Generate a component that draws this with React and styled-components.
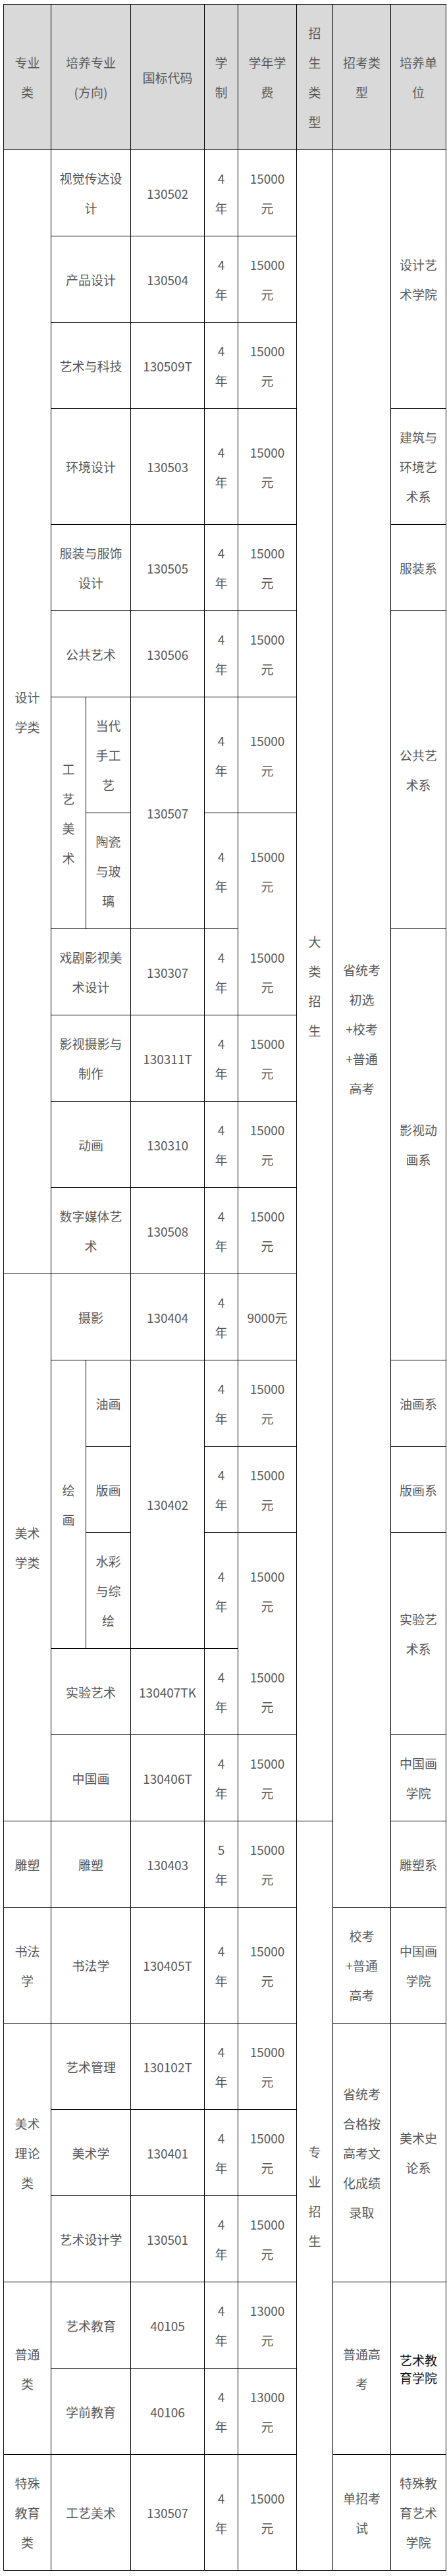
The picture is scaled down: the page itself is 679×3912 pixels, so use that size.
import React from 'react';
import styled, { createGlobalStyle, css } from 'styled-components';

const GlobalStyle = createGlobalStyle`
  body {
    margin: 0;
    background: #fff;
    font-family: "Noto Sans CJK SC", "Noto Sans", sans-serif;
  }
`;

const Page = styled.div`
  padding: 6px 2px 9px 5px;
`;

const Table = styled.table`
  width: 672px;
  table-layout: fixed;
  border-collapse: collapse;
  font-size: 19px;
  line-height: 45px;
  color: #595959;
`;

const cellBase = css`
  border: 1px solid #000;
  padding: 20px ${(p) => (p.$wide ? 10 : 12)}px;
  text-align: center;
  vertical-align: middle;
  font-weight: normal;
`;

const Th = styled.th`
  ${cellBase};
  background: #d9d9d9;
`;

const Td = styled.td`
  ${cellBase};
  ${(p) => p.$open && 'border-bottom-style: hidden;'}
`;

const Line = styled.span`
  display: block;
  white-space: nowrap;
`;

const Pasted = styled.span`
  display: block;
  color: #111;
  line-height: 27px;
`;

const widths = [72, 53, 68, 112, 51, 89, 55, 88, 84];

const yr = { t: '4年' };
const fee = { t: '15000元' };
const major = (t) => ({ t, cs: 2, wide: true });

const rows = [
  [{ t: '设计学类', rs: 12 }, major('视觉传达设计'), { t: '130502' }, yr, fee, { t: '大类招生', rs: 18 }, { t: '省统考初选+校考+普通高考', rs: 19 }, { t: '设计艺术学院', rs: 3 }],
  [major('产品设计'), { t: '130504' }, yr, fee],
  [major('艺术与科技'), { t: '130509T' }, yr, fee],
  [major('环境设计'), { t: '130503' }, yr, fee, { t: '建筑与环境艺术系' }],
  [major('服装与服饰设计'), { t: '130505' }, yr, fee, { t: '服装系' }],
  [major('公共艺术'), { t: '130506' }, yr, fee, { t: '公共艺术系', rs: 3 }],
  [{ t: '工艺美术', rs: 2 }, { t: '当代手工艺' }, { t: '130507', rs: 2 }, yr, fee],
  [{ t: '陶瓷与玻璃' }, yr, { ...fee, open: true }],
  [major('戏剧影视美术设计'), { t: '130307' }, yr, fee, { t: '影视动画系', rs: 5 }],
  [major('影视摄影与制作'), { t: '130311T' }, yr, fee],
  [major('动画'), { t: '130310' }, yr, fee],
  [major('数字媒体艺术'), { t: '130508' }, yr, fee],
  [{ t: '美术学类', rs: 6 }, major('摄影'), { t: '130404' }, yr, { t: '9000元' }],
  [{ t: '绘画', rs: 3 }, { t: '油画' }, { t: '130402', rs: 3 }, yr, fee, { t: '油画系' }],
  [{ t: '版画' }, yr, fee, { t: '版画系' }],
  [{ t: '水彩与综绘' }, yr, { ...fee, open: true }, { t: '实验艺术系', rs: 2 }],
  [major('实验艺术'), { t: '130407TK' }, yr, fee],
  [major('中国画'), { t: '130406T' }, yr, fee, { t: '中国画学院' }],
  [{ t: '雕塑' }, major('雕塑'), { t: '130403' }, { t: '5年' }, fee, { t: '专业招生', rs: 8 }, { t: '雕塑系' }],
  [{ t: '书法学' }, major('书法学'), { t: '130405T' }, yr, fee, { t: '校考+普通高考' }, { t: '中国画学院' }],
  [{ t: '美术理论类', rs: 3 }, major('艺术管理'), { t: '130102T' }, yr, fee, { t: '省统考合格按高考文化成绩录取', rs: 3 }, { t: '美术史论系', rs: 3 }],
  [major('美术学'), { t: '130401' }, yr, fee],
  [major('艺术设计学'), { t: '130501' }, yr, fee],
  [{ t: '普通类', rs: 2 }, major('艺术教育'), { t: '40105' }, yr, { t: '13000元' }, { t: '普通高考', rs: 2 }, { t: '艺术教育学院', rs: 2, pasted: true }],
  [major('学前教育'), { t: '40106' }, yr, { t: '13000元' }],
  [{ t: '特殊教育类' }, major('工艺美术'), { t: '130507' }, yr, fee, { t: '单招考试' }, { t: '特殊教育艺术学院' }],
];

const headers = [
  { t: '专业类' },
  { lines: ['培养专业', '(方向)'], cs: 2, wide: true },
  { t: '国标代码' },
  { t: '学制' },
  { t: '学年学费' },
  { t: '招生类型' },
  { t: '招考类型' },
  { t: '培养单位' },
];

export default function App() {
  return (
    <>
      <GlobalStyle />
      <Page>
        <Table>
          <colgroup>
            {widths.map((w, i) => (
              <col key={i} style={{ width: w }} />
            ))}
          </colgroup>
          <thead>
            <tr>
              {headers.map((h, i) => (
                <Th key={i} colSpan={h.cs} $wide={h.wide}>
                  {h.lines ? h.lines.map((l) => <Line key={l}>{l}</Line>) : h.t}
                </Th>
              ))}
            </tr>
          </thead>
          <tbody>
            {rows.map((row, r) => (
              <tr key={r}>
                {row.map((c, i) => (
                  <Td key={i} rowSpan={c.rs} colSpan={c.cs} $wide={c.wide} $open={c.open}>
                    {c.pasted ? <Pasted>{c.t}</Pasted> : c.t}
                  </Td>
                ))}
              </tr>
            ))}
          </tbody>
        </Table>
      </Page>
    </>
  );
}
